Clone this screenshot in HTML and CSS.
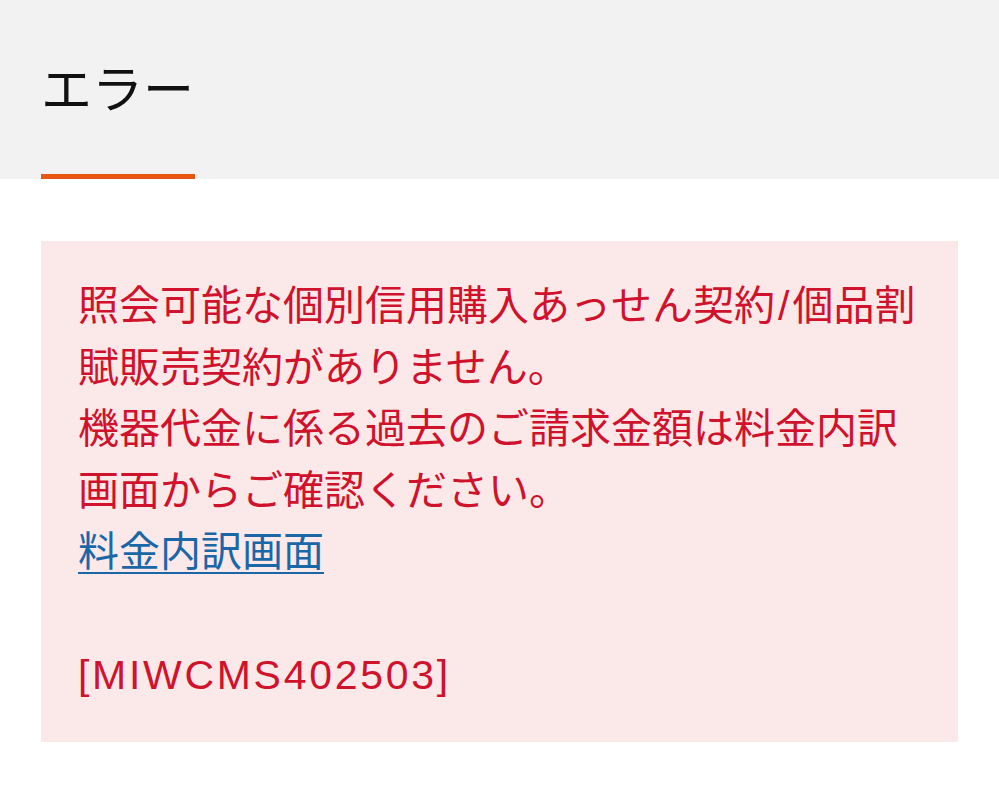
FILE: index.html
```html
<!DOCTYPE html>
<html lang="ja">
<head>
<meta charset="utf-8">
<title>エラー</title>
<link rel="stylesheet" href="styles.css">
</head>
<body>
<header class="page-header">
  <h1 class="page-title">エラー</h1>
  <div class="title-bar"></div>
</header>
<main class="content">
  <div class="error-box">
    <p class="error-text">照会可能な個別信用購入あっせん契約<span class="slash">/</span>個品割賦販売契約がありません。<br>機器代金に係る過去のご請求金額は料金内訳画面からご確認ください。<br><a class="error-link" href="#">料金内訳画面</a><br><br><span class="error-code">[MIWCMS402503]</span></p>
  </div>
</main>
</body>
</html>
```
FILE: styles.css
```css
html, body {
  margin: 0;
  padding: 0;
  background: #ffffff;
}
body {
  font-family: "Liberation Sans", "Noto Sans CJK JP", sans-serif;
  width: 999px;
}
.page-header {
  background: #f2f2f2;
  height: 179px;
  display: flex;
  flex-direction: column;
  justify-content: space-between;
  padding: 0 0 0 41px;
  box-sizing: border-box;
}
.page-title {
  margin: 0;
  padding-top: 58px;
  font-family: "Noto Sans CJK JP", sans-serif;
  font-weight: 400;
  font-size: 51px;
  line-height: 56px;
  color: #111111;
}
.title-bar {
  width: 154px;
  height: 5px;
  background: #e95513;
}
.content {
  padding: 62px 41px 0 41px;
}
.error-box {
  background: #fbe8e8;
  padding: 35px 37px;
}
.error-text {
  margin: 0;
  font-size: 41px;
  line-height: 61.5px;
  color: #d0122c;
}
.slash {
  margin: 0 3px;
}
.error-code {
  letter-spacing: 2.7px;
}
.error-link {
  color: #1a67a8;
  text-decoration: underline;
  text-underline-offset: 6px;
  text-decoration-thickness: 2px;
}
```
